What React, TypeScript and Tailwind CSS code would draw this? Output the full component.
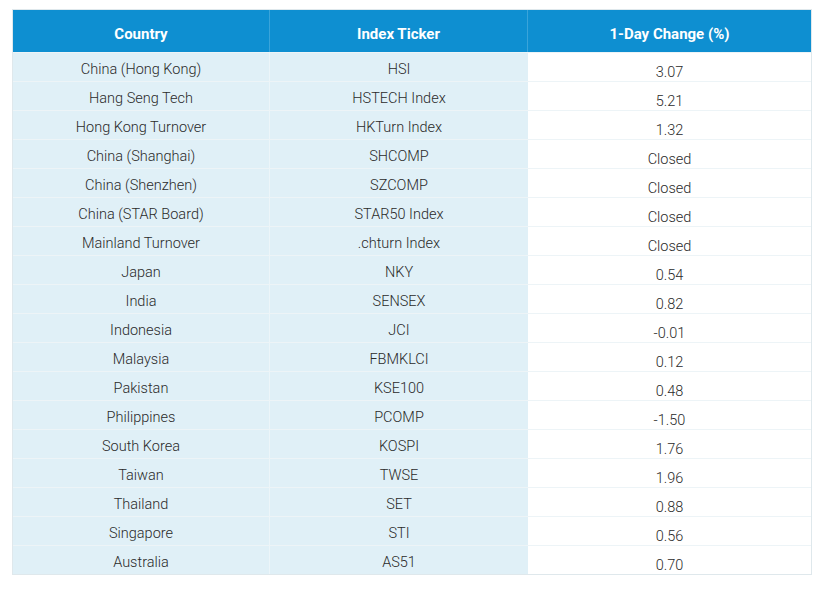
import React from 'react';

const rows: [string, string, string][] = [
  ['China (Hong Kong)', 'HSI', '3.07'],
  ['Hang Seng Tech', 'HSTECH Index', '5.21'],
  ['Hong Kong Turnover', 'HKTurn Index', '1.32'],
  ['China (Shanghai)', 'SHCOMP', 'Closed'],
  ['China (Shenzhen)', 'SZCOMP', 'Closed'],
  ['China (STAR Board)', 'STAR50 Index', 'Closed'],
  ['Mainland Turnover', '.chturn Index', 'Closed'],
  ['Japan', 'NKY', '0.54'],
  ['India', 'SENSEX', '0.82'],
  ['Indonesia', 'JCI', '-0.01'],
  ['Malaysia', 'FBMKLCI', '0.12'],
  ['Pakistan', 'KSE100', '0.48'],
  ['Philippines', 'PCOMP', '-1.50'],
  ['South Korea', 'KOSPI', '1.76'],
  ['Taiwan', 'TWSE', '1.96'],
  ['Thailand', 'SET', '0.88'],
  ['Singapore', 'STI', '0.56'],
  ['Australia', 'AS51', '0.70'],
];

export default function App() {
  return (
    <div className="w-[823px] h-[596px] bg-white pt-[9px] pl-[12px] font-['Roboto',sans-serif]">
      <div className="w-[800px] border border-[#dfe8ec]">
        <div className="grid grid-cols-[257px_258px_1fr] h-[42px] bg-[#0e8fd1] text-white text-[15px] leading-[18px] font-bold">
          <div className="flex items-center justify-center pt-[5px] border-r border-[#3aa4da]">Country</div>
          <div className="flex items-center justify-center pt-[5px] border-r border-[#3aa4da]">Index Ticker</div>
          <div className="flex items-center justify-center pt-[5px]">1-Day Change (%)</div>
        </div>
        {rows.map(([country, ticker, change], i) => (
          <div
            key={i}
            className="grid grid-cols-[257px_258px_1fr] grid-rows-[28px] h-[29px] overflow-hidden text-[14.5px] leading-[18px] font-light text-[#2a2a2a] border-t border-[#edf4f7]"
          >
            <div className="flex items-center justify-center pt-[5px] bg-[#e0f0f7] border-r border-[#ecf5f9]">{country}</div>
            <div className="flex items-center justify-center pt-[5px] bg-[#e0f0f7]">{ticker}</div>
            <div className="flex items-start justify-center bg-white pt-[13px] leading-[14px]">{change}</div>
          </div>
        ))}
      </div>
    </div>
  );
}
